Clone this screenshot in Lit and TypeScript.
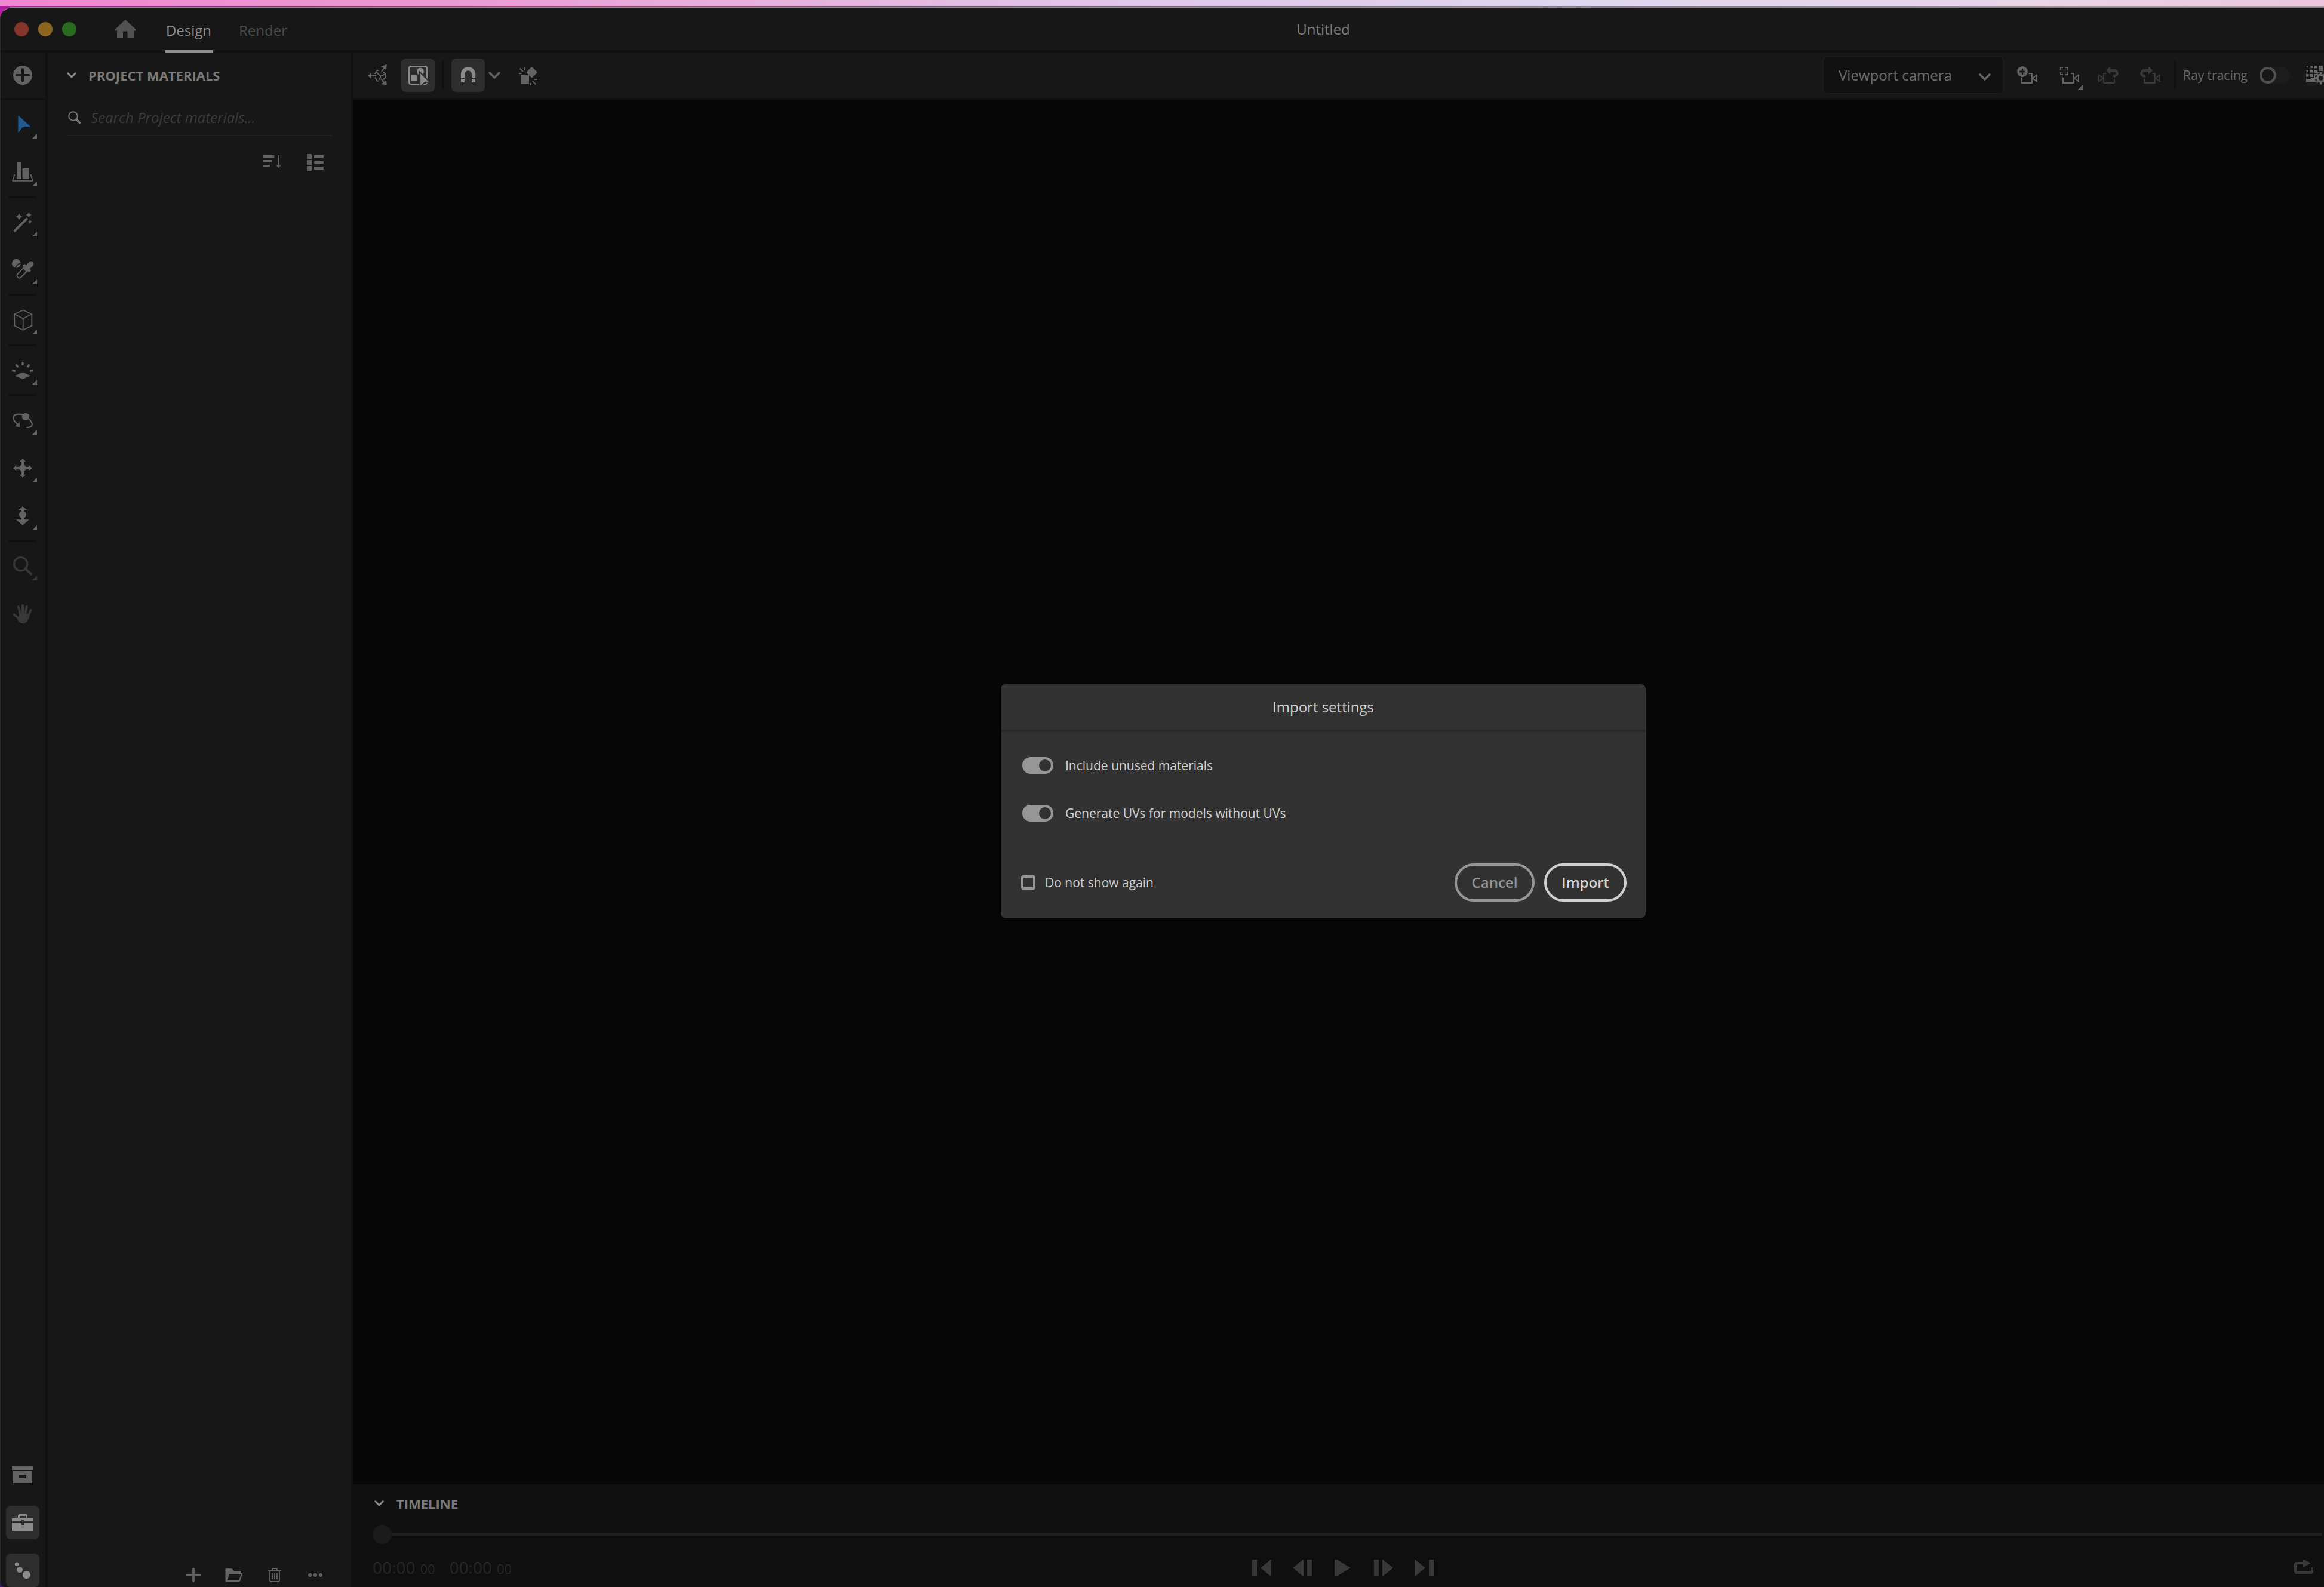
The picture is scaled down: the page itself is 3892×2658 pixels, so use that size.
import { LitElement, html, css, svg, nothing, type TemplateResult, type SVGTemplateResult } from "lit";
import { customElement, property } from "lit/decorators.js";

const star = (x: number, y: number, r: number) =>
  svg`<path fill="currentColor" d="M${x} ${y - r}Q${x + r * 0.2} ${y - r * 0.2} ${x + r} ${y}Q${x + r * 0.2} ${y + r * 0.2} ${x} ${y + r}Q${x - r * 0.2} ${y + r * 0.2} ${x - r} ${y}Q${x - r * 0.2} ${y - r * 0.2} ${x} ${y - r}z"/>`;

const line = (d: string, w: number, round = false) =>
  svg`<path d=${d} fill="none" stroke="currentColor" stroke-width=${w} stroke-linecap=${round ? "round" : "butt"} stroke-linejoin="round"/>`;

const fill = (d: string) => svg`<path d=${d} fill="currentColor"/>`;

/* Tool icons share a 56 unit box, the size of a tool button. */
const icons: Record<string, { w: number; h: number; art: SVGTemplateResult }> = {
  add: { w: 56, h: 56, art: svg`<circle cx="28" cy="28" r="16" fill="currentColor"/><path d="M28 18v20M18 28h20" stroke="#171717" stroke-width="4" stroke-linecap="round"/>` },
  select: { w: 56, h: 56, art: fill("M20.3 15q0-2 1.3-1L40 31.300q1.200 1.700-.8 1.700H29q-1.500 0-2.500 1.200l-5 7.300q-1.200 1-1.200-.5z") },
  ground: { w: 56, h: 56, art: svg`<rect x="18" y="12" width="8" height="28" rx="1" fill="currentColor"/><rect x="27.600" y="22" width="10.400" height="18" rx="1" fill="currentColor"/>${line("M14.600 32L11 42.800H45L41.400 32", 1.8)}` },
  wand: { w: 56, h: 56, art: svg`${line("M14.800 42.500L34.500 22.800", 4, true)}${star(22, 19, 6)}${star(38.3, 16, 5)}${star(40.3, 27.3, 3.6)}` },
  sampler: { w: 56, h: 56, art: svg`<circle cx="17.300" cy="17.300" r="7.500" fill="currentColor"/><path d="M16 25.500Q17 18.500 25.500 16.500M20.500 25.500L25.500 20.500" fill="none" stroke="#171717" stroke-width="1.600"/><g transform="translate(42 18) rotate(45)"><rect x="-4.500" y="-4.500" width="9" height="14" rx="4.500" fill="currentColor"/><rect x="-8" y="7.500" width="16" height="5" rx="1.500" fill="currentColor"/><rect x="-5" y="11" width="10" height="4" fill="currentColor"/>${line("M-4 13V27.500a4 4 0 0 0 8 0V13", 2)}</g>` },
  cube: { w: 56, h: 56, art: line("M28.700 11.500L43.300 18.300V37.600L28.700 44.800L14.300 37.600V18.300zM14.300 18.300L28.700 25.500L43.300 18.300M28.700 25.500V44.800", 1.8) },
  light: { w: 56, h: 56, art: svg`${fill("M28 31.500L41 37.300L28 43L15 37.300z")}${line("M28 14v6M16.700 18.500L20.300 23M10.300 28.300L16 29.700M39.300 18.500L35.700 23M45.700 28.300L40 29.700", 3.4)}` },
  orbit: { w: 56, h: 56, art: svg`<circle cx="33" cy="22" r="6.200" fill="currentColor"/>${line("M30 19C22 16.500 13 17 12.300 23C12 27 15 31 19.500 34.500M38 25C42 29 45.500 34 43 37.500C41.500 39.500 38 40 34.300 40", 2.2)}${fill("M15.500 38L23.300 39.500L22.500 30.500z")}` },
  move: { w: 56, h: 56, art: svg`<circle cx="28" cy="28" r="6" fill="currentColor"/>${line("M28 16V40M16 28H40", 4)}${fill("M28 12l5.300 5.300H22.700zM28 44l5.300-5.300H22.700zM12 28l5.300-5.300V33.300zM44 28l-5.300-5.300V33.300z")}` },
  dolly: { w: 56, h: 56, art: svg`<circle cx="28" cy="26" r="6" fill="currentColor"/>${line("M28 17V36", 4)}${fill("M28 12L35.300 18H20.700zM28 43.800L39 34.300H17z")}` },
  zoom: { w: 56, h: 56, art: svg`<circle cx="24.700" cy="24.700" r="11.200" fill="none" stroke="currentColor" stroke-width="3.200"/>${line("M33 33L42 41.500", 4.4, true)}` },
  hand: { w: 56, h: 56, art: svg`${line("M20.700 16L24.500 30M28 14.300V30M34.700 16L32 30M41.700 22L36 34", 4, true)}${line("M13.500 29.500L22 36", 3.600, true)}${fill("M19 33Q22 36 22.500 28H35L38.500 31Q37.500 43.500 29 44Q22.500 44 19.500 38z")}` },
  archive: { w: 56, h: 56, art: svg`<rect x="10" y="14" width="36" height="6" rx="1" fill="currentColor"/><path fill="currentColor" fill-rule="evenodd" d="M12 22H44V42H12zM23 28q-1 0-1 1v4q0 1 1 1h10q1 0 1-1v-4q0-1-1-1z"/>` },
  briefcase: { w: 56, h: 56, art: svg`${line("M21.500 20V16.500q0-1 1-1h11q1 0 1 1V20", 3)}<rect x="10" y="20" width="36" height="22" rx="1" fill="currentColor"/><path d="M10 26H46V28H10zM26 24h4v8h-4z" fill="#2d2d2d"/>` },
  nodes: { w: 56, h: 56, art: svg`<circle cx="18" cy="17.700" r="3.300" fill="currentColor"/><circle cx="23" cy="27.300" r="5" fill="currentColor"/><circle cx="34.400" cy="35.700" r="6.600" fill="currentColor"/>` },
  gizmo: { w: 56, h: 56, art: svg`${fill("M12 29L17.600 24.300V33.700zM43.700 10L34.300 13.200L43 19zM43.700 45.300L34.300 42.500L43 37z")}${line("M17 29H26.500M34 23.500L39.500 15.500M34 34L39.500 40.500M30 20H27.500L23.800 26M24 31.500L27.500 37.500H30.500M38 23L41 25.500V32L37.500 36M27 23.500L33.500 29.500L40.500 26.500M33.500 29.500L31.500 36", 2)}` },
  marquee: { w: 56, h: 56, art: svg`<rect x="13" y="13" width="30" height="30" rx="3" fill="none" stroke="currentColor" stroke-width="2"/><circle cx="32" cy="21.700" r="6" fill="currentColor"/><rect x="16" y="28" width="10" height="10" rx="1" fill="currentColor"/><path d="M32 25.300L45.700 38.700H39L32.300 45.700z" fill="currentColor" stroke="#2d2d2d" stroke-width="4" paint-order="stroke"/>` },
  magnet: { w: 56, h: 56, art: svg`${line("M19 32V26.300a9.100 9.100 0 0 1 18.200 0V32", 6.2)}<path d="M16 34h6v6h-6zM34 34h6v6h-6z" fill="currentColor"/>` },
  snap: { w: 56, h: 56, art: svg`<rect x="16" y="28" width="14" height="14" fill="currentColor"/><rect x="-6.700" y="-6.700" width="13.400" height="13.400" rx="1" transform="translate(34.700 23.300) rotate(45)" fill="currentColor"/>${line("M14.700 16.700L20 22M23 15V19.700M13 25H17.700M36 38L41.300 43.300M38.700 35H43.300M33 40.700V45.300", 2)}` },
  cameraAdd: { w: 56, h: 56, art: svg`<g transform="translate(10 10)"><circle cx="9" cy="12" r="9" fill="currentColor"/><path d="M9 7v10M4 12h10" stroke="#171717" stroke-width="2.400"/>${line("M7 22V31H25V15H19.700M33 17.500V28.500L26 23z", 2)}</g>` },
  cameraFrame: { w: 56, h: 56, art: svg`<g transform="translate(12 10)">${line("M3 9V5H7M11 5H15V9M15 13V17H11M7 17H3V13M7 22V31H25V15H20M33 17.500V28.500L26 23z", 2)}</g>` },
  cameraUndo: { w: 56, h: 56, art: svg`<g transform="translate(10 10)">${line("M13.500 15H9V31H27V24M1 17.500V28.500L8 23z", 2)}${line("M19 10H27.500a4.800 4.800 0 0 1 0 9.500H25", 4.4)}${fill("M13 10L20 3V16.700z")}</g>` },
  cameraRedo: { w: 56, h: 56, art: svg`<g transform="translate(46 10) scale(-1 1)">${line("M13.500 15H9V31H27V24M1 17.500V28.500L8 23z", 2)}${line("M19 10H27.500a4.800 4.800 0 0 1 0 9.500H25", 4.4)}${fill("M13 10L20 3V16.700z")}</g>` },
  quality: { w: 30, h: 32, art: svg`<path fill="currentColor" d="M1 1h2v2H1zM7.500.5h3.500v3.500H7.500zM14 0h4.500v4.500H14zM21 0h7v9h-7zM.5 7.500H4V11H.5zM7 7h4.500v4.500H7zM14 7h5v5h-5zM0 14h4.500v4.500H0zM7 14h5v5H7zM0 22h8v-2h5v-6h6v-3h9v5l-11 12H0z"/><circle cx="24.700" cy="21" r="10" fill="#171717"/><circle cx="24.700" cy="21" r="5.600" fill="none" stroke="currentColor" stroke-width="3.800"/><path d="M24.700 10.500v4M24.700 27.500v4M14.200 21h4M17.300 13.600l2.800 2.800M17.300 28.400l2.800-2.800M32.100 13.600l-2.800 2.800M32.100 28.400l-2.800-2.800" stroke="currentColor" stroke-width="3.400" fill="none"/>` },
  home: { w: 36, h: 32, art: fill("M18 0L35.700 16.500q.6 1.500-1.200 2H32V30q0 1-1 1H21.500V19.500H14V31H5q-1 0-1-1V18.500H1.500Q-.3 18 .3 16.500z") },
  chevron: { w: 20, h: 12, art: line("M2 2L10 10L18 2", 3.6, true) },
  chevronSmall: { w: 16, h: 10, art: line("M1.800 1.800L8 8L14.200 1.800", 3, true) },
  search: { w: 22, h: 22, art: svg`<circle cx="8.500" cy="8.500" r="7.300" fill="none" stroke="currentColor" stroke-width="2"/>${line("M14 14L20 20", 3.6, true)}` },
  sort: { w: 32, h: 24, art: svg`<path d="M0 1q0-1 1-1h17.500q1 0 1 1v2q0 1-1 1H1q-1 0-1-1zM0 9q0-1 1-1h14q1 0 1 1v2q0 1-1 1H1q-1 0-1-1zM0 17q0-1 1-1h10q1 0 1 1v2q0 1-1 1H1q-1 0-1-1zM25.200 0h2.800v16.500h2.600L26.600 21.500 22.600 16.500h2.600z" fill="currentColor"/>` },
  list: { w: 28, h: 28, art: svg`${[0, 10, 20].map((y) => svg`<rect x="0" y=${y} width="8" height="8" rx="1" fill="currentColor"/><rect x="12" y=${y + 2} width="16" height="4" rx="1" fill="currentColor"/>`)}` },
  plus: { w: 24, h: 24, art: line("M12 1.500V22.500M1.500 12H22.500", 3.6, true) },
  folder: { w: 30, h: 24, art: svg`<path fill="currentColor" fill-rule="evenodd" d="M.5 22V2.500q0-1.500 1.500-1.500H9.500q1.500 0 2.500 1l2.500 3H24.500q1.500 0 1.500 1.500V9h2.500q1 0 .7 1L25 22q-.3 1-1.500 1H1.500q-1 0-1-1zM7 11L3.500 21H23L26.700 11z"/>` },
  trash: { w: 22, h: 24, art: line("M0 5H22M7 4.500V3q0-2 2-2h4q2 0 2 2V4.500M3 5.500V21q0 2 2 2H17q2 0 2-2V5.500M7 9V19M11 9V19M15 9V19", 1.8) },
  more: { w: 24, h: 24, art: svg`<circle cx="3" cy="12" r="3" fill="currentColor"/><circle cx="12" cy="12" r="3" fill="currentColor"/><circle cx="21" cy="12" r="3" fill="currentColor"/>` },
  first: { w: 32, h: 28, art: fill("M0 0H8V28H0zM32 0V28H31L14 14L31 0z") },
  back: { w: 32, h: 28, art: fill("M24 0H32V28H24zM18 0V28H17L0 14L17 0z") },
  play: { w: 32, h: 28, art: fill("M2 0H6L29 14L6 28H2z") },
  forward: { w: 32, h: 28, art: fill("M0 0H8V28H0zM14 0V28H15L32 14L15 0z") },
  last: { w: 32, h: 28, art: fill("M24 0H32V28H24zM0 0V28H1L18 14L1 0z") },
  loop: { w: 32, h: 28, art: svg`${line("M14 6H4q-2 0-2 2V20q0 2 2 2H28q2 0 2-2V13", 4)}${fill("M14 0h3L28 6L17 12H14z")}` },
};

const icon = (name: string) => {
  const { w, h, art } = icons[name];
  return html`<svg width=${w} height=${h} viewBox="0 0 ${w} ${h}" aria-hidden="true">${art}</svg>`;
};

@customElement("tool-button")
export class ToolButton extends LitElement {
  @property() icon = "";
  @property() label = "";
  @property() tone = "normal";
  @property({ type: Boolean }) menu = false;

  static styles = css`
    :host { display: block; flex: none; }
    button {
      display: grid; place-items: center; box-sizing: border-box;
      width: 56px; height: 56px; margin: 0; padding: 0;
      border: 0; border-radius: 8px; background: none; color: #626262;
    }
    button > * { grid-area: 1 / 1; }
    svg { display: block; }
    .on { background: #2d2d2d; color: #8b8b8b; }
    .accent .art { color: #235a8d; }
    .dim { color: #383838; }
    .corner { place-self: end; margin: 0 4px 4px 0; }
  `;

  render() {
    return html`<button class=${this.tone} aria-label=${this.label}>
      <span class="art">${icon(this.icon)}</span>
      ${this.menu ? html`<svg class="corner" width="8" height="8" viewBox="0 0 8 8" aria-hidden="true">${fill("M8 0V8H0z")}</svg>` : nothing}
    </button>`;
  }
}

type Tool = [icon: string, label: string, menu: boolean, tone?: string];

const toolGroups: Tool[][] = [
  [["select", "Select", true, "accent"], ["ground", "Move to ground", true]],
  [["wand", "Magic wand", true], ["sampler", "Sampler", true]],
  [["cube", "Primitives", true]],
  [["light", "Lights", true]],
  [["orbit", "Orbit", true], ["move", "Pan", true], ["dolly", "Dolly", true]],
  [["zoom", "Zoom", true, "dim"], ["hand", "Hand", false, "dim"]],
];

@customElement("app-root")
export class AppRoot extends LitElement {
  static styles = css`
    :host {
      display: block;
      font: 24px/32px "Open Sans", "Noto Sans", sans-serif;
      color: #747474;
    }
    svg { display: block; flex: none; }
    button, input, select { font: inherit; color: inherit; margin: 0; }
    button { padding: 0; border: 0; background: none; }

    .desktop {
      position: relative; display: flex; flex-direction: column; box-sizing: border-box;
      height: 100vh; padding-top: 10px; overflow: hidden;
      background:
        linear-gradient(90deg, #ee88d0, #ea98d2 18%, #e8aedb 30%, #e0c8e8 50%, #dfd6ee 68%, #ead4e8 88%, #ecc6dc) top / 100% 10px no-repeat,
        linear-gradient(90deg, #b51fa6, #8a2a72 12%, #b03a88 22%, #6a4a78 40%, #8a7f94 70%, #b8a0b2) 0 10px / 100% 2px no-repeat,
        linear-gradient(180deg, #b51fa6, #3a1b6e);
    }
    .window {
      display: flex; flex-direction: column; flex: 1; min-height: 0; overflow: hidden;
      margin-top: 2px; border: solid #2c2c2c; border-width: 0 0 0 1px; border-top: 1px solid #8c868a;
      border-radius: 20px 0 0 8px; background: #171717;
    }

    .titlebar {
      display: flex; align-items: center; flex: none; height: 71px; padding-left: 23px;
      border-bottom: 4px solid #111;
    }
    .lights { display: flex; gap: 16px; margin-right: 64px; }
    .light { width: 24px; height: 24px; border-radius: 50%; }
    .close { background: #86352c; }
    .minimise { background: #8b6420; }
    .maximise { background: #296b21; }
    .home { color: #525252; margin-right: 48px; }
    .tabs { display: flex; gap: 44px; align-self: stretch; margin-bottom: -4px; }
    .tab { box-sizing: border-box; min-width: 80px; padding: 4px 0 0; border-bottom: 4px solid transparent; color: #4b4b4b; }
    .tab.current { color: #8f8f8f; border-color: #8f8f8f; }
    .title {
      position: absolute; left: 540px; right: 0; top: 13px; height: 72px;
      display: grid; place-items: center; margin: 0; font-size: 24px; font-weight: 400; color: #7c7c7c;
      pointer-events: none;
    }

    .body { display: flex; flex: 1; min-height: 0; }
    .rail { display: flex; flex-direction: column; align-items: flex-start; flex: none; box-sizing: border-box; width: 79px; padding-left: 9px; border-right: 4px solid #111; }
    .rail-add { display: grid; align-items: center; align-self: stretch; height: 76px; margin-left: -9px; padding-left: 9px; border-bottom: 4px solid #111; }
    .tools { display: flex; flex-direction: column; padding-top: 12px; }
    .group { display: flex; flex-direction: column; align-items: center; gap: 24px; }
    .group + .group::before { content: ""; width: 48px; height: 4px; margin: 12px 0 -12px; background: #111; }
    .dock { display: flex; flex-direction: column; gap: 24px; margin-top: auto; }

    .materials { display: flex; flex-direction: column; flex: none; box-sizing: border-box; width: 512px; padding: 0 32px; border-right: 4px solid #111; }
    .heading { display: flex; align-items: center; gap: 20px; margin: 0; font-size: 22px; font-weight: 700; line-height: 30px; color: #7a7a7a; }
    .heading svg { color: #8f8f8f; }
    .materials .heading { height: 76px; }
    .search { display: flex; align-items: center; gap: 16px; padding: 4px 2px 0; height: 58px; border-bottom: 2px solid #202020; color: #777; }
    .search input {
      flex: 1; min-width: 0; padding: 0; border: 0; outline: 0; background: none; appearance: none; font-style: italic;
    }
    .search input::placeholder { color: #3c3c3c; opacity: 1; }
    .views { display: flex; justify-content: flex-end; gap: 16px; margin-top: 16px; color: #626262; }
    .plain { display: grid; place-items: center; width: 56px; height: 56px; }
    .actions { display: flex; justify-content: flex-end; gap: 12px; margin-top: auto; margin-bottom: -8px; color: #646464; }

    .main { display: flex; flex-direction: column; flex: 1; min-width: 0; }
    .toolbar { display: flex; align-items: center; gap: 12px; flex: none; height: 76px; padding-left: 12px; border-bottom: 4px solid #101010; }
    .pair { display: flex; align-items: center; color: #626262; }
    .drop { display: grid; place-items: center; width: 32px; height: 56px; }
    .rule { width: 4px; height: 48px; background: #111; flex: none; }
    .camera { display: grid; align-items: center; margin-left: auto; color: #666; }
    .camera > * { grid-area: 1 / 1; }
    .camera select {
      width: 304px; height: 64px; padding: 0 64px 0 25px; appearance: none; outline: 0;
      border: 2px solid #1d1d1d; border-radius: 8px; background: #111; color: #6c6c6c;
    }
    .camera svg { justify-self: end; margin: 6px 22px 0 0; pointer-events: none; }
    .ray { display: flex; align-items: center; gap: 20px; margin-right: 14px; font-size: 21px; color: #6a6a6a; white-space: nowrap; }
    .quality { display: block; color: #666; }
    .switch { display: block; box-sizing: border-box; appearance: none; width: 52px; height: 28px; border-radius: 14px; background: #1c1c1c; }
    .switch::before { content: ""; display: block; box-sizing: border-box; width: 28px; height: 28px; border-radius: 50%; border: 4px solid #505050; background: #171717; }
    .switch:checked { padding: 4px; background: #969696; }
    .switch:checked::before { width: 20px; height: 20px; margin-left: auto; border: 0; background: #323232; }
    .viewport { flex: 1; background: #070707; }

    .timeline { flex: none; height: 172px; box-sizing: border-box; padding: 16px 4px 0 32px; background: #0f0f0f; }
    .timeline .heading { gap: 21px; padding-left: 3px; height: 32px; }
    .scrub { display: block; width: 100%; height: 32px; margin: 20px 0 0; appearance: none; background: none; }
    .scrub::-webkit-slider-runnable-track { height: 4px; background: #1d1d1d; }
    .scrub::-webkit-slider-thumb { appearance: none; width: 32px; height: 32px; margin-top: -14px; border-radius: 50%; background: #1b1b1b; }
    .transport { display: grid; grid-template-columns: 1fr auto 1fr; align-items: center; height: 80px; padding-right: 14px; color: #383838; }
    .times { display: flex; gap: 24px; color: #262626; font-size: 28px; line-height: 36px; }
    .frames { font-size: 22px; }
    .time { display: flex; align-items: baseline; gap: 8px; }
    .play { display: flex; gap: 36px; }
    .loop { justify-self: end; }

    .modal {
      position: absolute; inset: 0; display: grid; place-items: center; padding: 26px 0 0 540px;
    }
    .dialog {
      position: static; display: block; box-sizing: border-box; width: 1080px; margin: 0; padding: 0;
      border: 0; border-radius: 8px; background: #323232; color: #d0d0d0;
      font-size: 21px; line-height: 28px; box-shadow: 0 0 4px #000;
    }
    .dialog h2 { margin: 0; padding: 22px 0; border-bottom: 4px solid #2a2a2a; font-size: 24px; font-weight: 400; line-height: 32px; text-align: center; }
    .options { display: grid; gap: 52px; justify-items: start; padding: 42px 36px 0; }
    .option { display: flex; align-items: center; gap: 20px; }
    .footer { display: flex; align-items: center; gap: 16px; padding: 70px 32px 28px 34px; }
    .again { display: flex; align-items: center; gap: 16px; margin-right: auto; }
    .tick { appearance: none; box-sizing: border-box; width: 24px; height: 24px; border: 4px solid #969696; border-radius: 4px; }
    .pill { height: 64px; padding: 0 25px; border: 4px solid #969696; border-radius: 32px; color: #969696; font-size: 24px; font-weight: 600; }
    .pill.primary { border-color: #d0d0d0; color: #d6d6d6; }
  `;

  private tool([name, label, menu, tone = "normal"]: Tool): TemplateResult {
    return html`<tool-button .icon=${name} .label=${label} .menu=${menu} .tone=${tone}></tool-button>`;
  }

  private plain(name: string, label: string, cls = "plain") {
    return html`<button class=${cls} aria-label=${label}>${icon(name)}</button>`;
  }

  render() {
    return html`
      <div class="desktop">
        <div class="window">
          <header class="titlebar">
            <div class="lights">
              <button class="light close" aria-label="Close"></button>
              <button class="light minimise" aria-label="Minimise"></button>
              <button class="light maximise" aria-label="Maximise"></button>
            </div>
            ${this.plain("home", "Home", "home")}
            <nav class="tabs">
              <button class="tab current">Design</button>
              <button class="tab">Render</button>
            </nav>
            <h1 class="title">Untitled</h1>
          </header>
          <div class="body">
            <aside class="rail">
              <div class="rail-add">${this.tool(["add", "Add", false])}</div>
              <div class="tools">${toolGroups.map((g) => html`<div class="group">${g.map((t) => this.tool(t))}</div>`)}</div>
              <div class="dock">
                ${this.tool(["archive", "Starter assets", false])}
                ${this.tool(["briefcase", "Libraries", false, "on"])}
                ${this.tool(["nodes", "Project materials", false, "on"])}
              </div>
            </aside>
            <section class="materials">
              <h2 class="heading">${icon("chevronSmall")}PROJECT MATERIALS</h2>
              <label class="search">${icon("search")}<input type="search" aria-label="Search" placeholder="Search Project materials..." /></label>
              <div class="views">${this.plain("sort", "Sort")}${this.plain("list", "List view")}</div>
              <div class="actions">
                ${this.plain("plus", "New material")}${this.plain("folder", "Open")}${this.plain("trash", "Delete")}${this.plain("more", "More")}
              </div>
            </section>
            <main class="main">
              <div class="toolbar">
                ${this.tool(["gizmo", "Transform gizmo", false])}
                ${this.tool(["marquee", "Selection mode", false, "on"])}
                <span class="rule"></span>
                <div class="pair">${this.tool(["magnet", "Snap", false, "on"])}${this.plain("chevron", "Snap options", "drop")}</div>
                ${this.tool(["snap", "Snap to object", false])}
                <div class="camera">
                  <select aria-label="Camera"><option>Viewport camera</option></select>
                  ${icon("chevron")}
                </div>
                ${this.tool(["cameraAdd", "Add camera", false])}
                ${this.tool(["cameraFrame", "Frame", true])}
                ${this.tool(["cameraUndo", "Undo camera move", false, "dim"])}
                ${this.tool(["cameraRedo", "Redo camera move", false, "dim"])}
                <span class="rule"></span>
                <label class="ray">Ray tracing<input class="switch" type="checkbox" role="switch" /></label>
                ${this.plain("quality", "Render quality", "quality")}
              </div>
              <div class="viewport"></div>
              <section class="timeline">
                <h2 class="heading">${icon("chevronSmall")}TIMELINE</h2>
                <input class="scrub" type="range" min="0" max="100" value="0" aria-label="Time" />
                <div class="transport">
                  <div class="times">
                    <span class="time">00:00 <span class="frames">00</span></span>
                    <span class="time">00:00 <span class="frames">00</span></span>
                  </div>
                  <div class="play">
                    ${this.plain("first", "First frame", "")}${this.plain("back", "Previous frame", "")}${this.plain("play", "Play", "")}${this.plain("forward", "Next frame", "")}${this.plain("last", "Last frame", "")}
                  </div>
                  ${this.plain("loop", "Loop", "loop")}
                </div>
              </section>
            </main>
          </div>
        </div>
        <div class="modal">
          <dialog class="dialog" open>
            <h2>Import settings</h2>
            <div class="options">
              <label class="option"><input class="switch" type="checkbox" role="switch" checked />Include unused materials</label>
              <label class="option"><input class="switch" type="checkbox" role="switch" checked />Generate UVs for models without UVs</label>
            </div>
            <div class="footer">
              <label class="again"><input class="tick" type="checkbox" />Do not show again</label>
              <button class="pill">Cancel</button>
              <button class="pill primary">Import</button>
            </div>
          </dialog>
        </div>
      </div>
    `;
  }
}
